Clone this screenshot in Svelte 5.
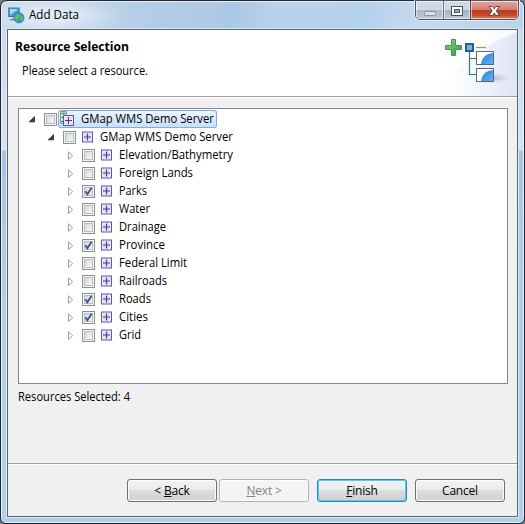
<script>
  const rows = [
    { label: 'GMap WMS Demo Server', level: 0, open: true, server: true, w: 133 },
    { label: 'GMap WMS Demo Server', level: 1, open: true, w: 133 },
    { label: 'Elevation/Bathymetry', level: 2, w: 114 },
    { label: 'Foreign Lands', level: 2, w: 74 },
    { label: 'Parks', level: 2, checked: true, w: 28 },
    { label: 'Water', level: 2, w: 31 },
    { label: 'Drainage', level: 2, w: 47 },
    { label: 'Province', level: 2, checked: true, w: 46 },
    { label: 'Federal Limit', level: 2, w: 68 },
    { label: 'Railroads', level: 2, w: 48 },
    { label: 'Roads', level: 2, checked: true, w: 32 },
    { label: 'Cities', level: 2, checked: true, w: 29 },
    { label: 'Grid', level: 2, w: 22 }
  ];
</script>

{#snippet fitted(label, w)}
  <svg class="label" width={w} height="18"><text x="0" y="13" textLength={w} lengthAdjust="spacingAndGlyphs">{label}</text></svg>
{/snippet}

{#snippet layerIcon()}
  <svg class="layer" width="11" height="12" viewBox="0 0 11 12">
    <rect x=".5" y="1" width="10" height="10" fill="#f1edfd" stroke="#6252a6" />
    <path d="M2 2.5h7v7H2z" fill="#e2dcf9" />
    <path d="M5.5 2.5v7M2 6h7" stroke="#4c398f" stroke-width="1.1" />
  </svg>
{/snippet}

<div class="window">
  <header class="titlebar">
    <svg width="17" height="17" viewBox="0 0 17 17">
      <rect x=".7" y="1" width="10.5" height="8.5" fill="#4b9cdb" stroke="#3a76b4" />
      <path d="M2 2h8L2 8z" fill="#a8dbf7" />
      <path d="M4 10h4v2H4z" fill="#b9c8da" /><path d="M2 12.7h7" stroke="#6b89b1" stroke-width="1.4" />
      <circle cx="11" cy="10.8" r="5.1" fill="#3b8fc9" stroke="#3879a9" stroke-width=".7" />
      <path d="M8 7.5l3-1 1.5 1-1 1.5 1 1.5-2 1-1 3-2-2-.8-2zM13 9l2.3 1-.6 3-1.7 1-.8-2z" fill="#5fc35b" />
    </svg>
    <div class="title">{@render fitted('Add Data', 50)}</div>
    <div class="controls">
      <div class="ctl min"><svg width="27" height="19" viewBox="0 0 27 19"><rect x="8.5" y="10.5" width="11" height="4" rx=".5" fill="#dce0e6" stroke="#8b97a8" /></svg></div>
      <div class="ctl max"><svg width="26" height="19" viewBox="0 0 26 19"><rect x="7.5" y="5.5" width="11" height="9" fill="#fff" stroke="#4c535f" /><rect x="10.5" y="8.5" width="5" height="3" fill="#9ba9b9" stroke="#4c535f" /></svg></div>
      <div class="ctl close"><svg width="47" height="19" viewBox="0 0 47 19"><path d="M18 5.5h3.5l1.7 2.4 1.7-2.4h3.5l-3.2 4.3 3.3 4.7h-3.6l-1.7-2.6-1.7 2.6h-3.6l3.3-4.7z" fill="#fff" stroke="#5b3d43" stroke-width=".9" /></svg></div>
    </div>
  </header>
  <main class="client">
    <section class="banner">
      <div class="bannertext">
        <h1>{@render fitted('Resource Selection', 114)}</h1>
        <p>{@render fitted('Please select a resource.', 126)}</p>
      </div>
      <svg class="art" width="117" height="66" viewBox="0 0 117 66">
        <defs>
          <linearGradient id="wash"><stop offset="0" stop-color="#fff" stop-opacity="0" /><stop offset=".55" stop-color="#f3f5fc" /><stop offset="1" stop-color="#dfe4f6" /></linearGradient>
          <linearGradient id="wash2"><stop offset="0" stop-color="#fff" /><stop offset="1" stop-color="#e9edfa" stop-opacity=".6" /></linearGradient>
          <linearGradient id="blue" x2="1" y2="1"><stop offset="0" stop-color="#2279d7" /><stop offset="1" stop-color="#65b5fa" /></linearGradient>
          <linearGradient id="green" x2="1" y2="1"><stop offset="0" stop-color="#8bd47d" /><stop offset="1" stop-color="#2f9650" /></linearGradient>
          <radialGradient id="shade"><stop offset="0" stop-color="#a7a8b8" stop-opacity=".7" /><stop offset="1" stop-color="#c8c8d8" stop-opacity="0" /></radialGradient>
        </defs>
        <path d="M117 2C82 14 58 38 30 66h87z" fill="url(#wash)" />
        <path d="M70 0h47v5C96 10 82 20 70 30z" fill="url(#wash2)" opacity=".45" />
        <g transform="translate(8 0)">
          <ellipse cx="87" cy="48" rx="15" ry="6" fill="url(#shade)" />
          <path d="M43.5 9.5h4v6h6v4h-6v6h-4v-6h-6v-4h6z" fill="url(#green)" stroke="#3d9b52" />
          <path d="M61.5 22v22.5h7M61.5 28.5h7" fill="none" stroke="#34805f" stroke-width="1.2" />
          <path d="M68 17.5h10" stroke="#7ba968" stroke-width="1.2" />
          <rect x="58" y="14" width="7" height="7" fill="#77b4df" stroke="#245f91" stroke-width="2" />
          <rect x="68.5" y="21.5" width="17" height="13" fill="#fff" stroke="#5b6878" />
          <path d="M73 34c1-6 4-10 12-11v11z" fill="url(#blue)" />
          <rect x="68.5" y="38.5" width="17" height="13" fill="#fff" stroke="#5b6878" />
          <path d="M73 51c1-6 4-10 12-11v11z" fill="url(#blue)" />
        </g>
      </svg>
    </section>
    <section class="body">
      <div class="tree">
        {#each rows as row}
          <div class="row level{row.level}">
            <span class="expander">
              <svg width="8" height="9" viewBox="0 0 8 9">
                {#if row.open}
                  <path d="M6.5 1.8v5H1.3z" fill="#404040" stroke="#222" stroke-width=".8" />
                {:else}
                  <path d="M2.5.8l4.2 3.8-4.2 3.8z" fill="#fff" stroke="#a0a0a0" />
                {/if}
              </svg>
            </span>
            <span class="check">
              {#if row.checked}
                <svg width="9" height="9" viewBox="0 0 9 9"><path d="M1.4 4.2l2 3L7.6.8" fill="none" stroke="#405892" stroke-width="1.9" /></svg>
              {/if}
            </span>
            <span class="item" class:selected={row.server}>
              {#if row.server}
                <svg class="server" width="16" height="16" viewBox="0 0 16 16">
                  <path d="M1.5.5h6v12h-6z" fill="#dceadd" stroke="#7c9587" stroke-width=".9" />
                  <path d="M2.5 2.5h4M2.5 6.5h2" stroke="#3f9353" stroke-width="1.6" /><path d="M2 10.5h2" stroke="#555" />
                  <rect x="4.5" y="4.5" width="10" height="10" fill="#eae4fc" stroke="#6252a6" />
                  <path d="M9.5 6v7M6 9.5h7" stroke="#4c398f" stroke-width="1.1" />
                </svg>
              {:else}
                {@render layerIcon()}
              {/if}
              {@render fitted(row.label, row.w)}
            </span>
          </div>
        {/each}
      </div>
      <div class="status">{@render fitted('Resources Selected: 4', 112)}</div>
    </section>
    <footer>
      <button><span>&lt; <u>B</u>ack</span></button>
      <button class="disabled" disabled><span><u>N</u>ext &gt;</span></button>
      <button class="default"><span><u>F</u>inish</span></button>
      <button class="cancel"><span>Cancel</span></button>
    </footer>
  </main>
</div>

<style>
  :global(body) { background: #777; overflow: hidden; }
  .window {
    box-sizing: border-box; width: 525px; height: 524px; padding: 0 6px 6px;
    display: flex; flex-direction: column;
    border: 1px solid #20242c; border-radius: 7px 7px 6px 6px;
    box-shadow: inset 0 0 0 1px #e5f2fb;
    background: linear-gradient(#c9d9ea 0, #d7e4f1 149px, #a9c4e0 150px, #b3cfea 300px, #b3d0ea);
    font: 12px "Open Sans", "Noto Sans", sans-serif; color: #000;
  }
  svg { display: block; flex: none; overflow: visible; }
  text { fill: #000; }
  .titlebar {
    height: 27px; margin: 1px -5px 0; padding-left: 6px; display: flex; align-items: flex-start; flex: none;
    border-radius: 6px 6px 0 0;
    background: radial-gradient(ellipse 75px 22px at 50px 14px, #e2ebf5 20%, #d5e3f200), linear-gradient(100deg, #c4d6ea 0, #abc8e4 45%, #b7d2ec 52%, #b5d2ed 70%, #c7d9ee 80%, #b9d2ea);
  }
  .titlebar > svg { margin-top: 5px; }
  .title { margin: 4px 0 0 4px; }
  .controls {
    display: flex; margin: -2px 4px 0 auto; box-sizing: border-box; width: 104px; height: 20px;
    border: 1px solid #4d5664; border-radius: 0 0 5px 5px; overflow: hidden; box-shadow: 0 0 0 1px #dfebf6;
  }
  .ctl { box-sizing: border-box; box-shadow: inset 0 0 0 1px #ffffff90; }
  .min { width: 27px; background: linear-gradient(#d0dae6 48%, #a9b8ca 50%, #b9cadb); }
  .max { width: 27px; border-left: 1px solid #65707f; background: linear-gradient(#d0dae6 48%, #a1b1c4 50%, #b9cadb); }
  .close { width: 48px; border-left: 1px solid #5d3b40; background: linear-gradient(#e4a69a 0, #d38072 48%, #b83822 50%, #c84d2d 80%, #de8a68); }
  .client {
    flex: 1; display: flex; flex-direction: column; min-height: 0;
    border: 1px solid #596573; box-shadow: 0 0 0 1px #dcebf8; background: #f0f0f0;
  }
  .banner { height: 66px; flex: none; display: flex; justify-content: space-between; background: #fff; border-bottom: 1px solid #a0a0a0; box-shadow: 0 1px #fff; }
  .art { overflow: hidden; }
  .bannertext { padding: 8px 0 0 7px; }
  h1 { margin: 0; font: bold 12px/18px "Open Sans", "Noto Sans", sans-serif; }
  p { margin: 6px 0 0 7px; }
  .body { flex: 1; padding: 11px 9px 0 10px; }
  .tree { box-sizing: border-box; height: 276px; border: 1px solid #828790; background: #fff; padding-top: 1px; }
  .row { height: 18px; display: flex; align-items: center; padding-left: 9px; }
  .level1 { padding-left: 28px; }
  .level2 { padding-left: 47px; }
  .expander { width: 16px; padding-top: 1px; }
  .check {
    box-sizing: border-box; width: 13px; height: 13px; padding: 1px; margin-top: 1px;
    border: 1px solid #8e8f8f; box-shadow: inset 0 0 0 1px #f4f4f4, inset 0 0 0 2px #b9bec5;
    background: linear-gradient(135deg, #cbcfd5, #f6f6f6 80%);
  }
  .item { display: flex; align-items: center; height: 18px; margin-left: 2px; padding-left: 4px; box-sizing: border-box; }
  .layer { margin-right: 7px; }
  .server { margin-right: 6px; }
  .selected { margin-left: 1px; padding: 0 3px 0 1px; border-radius: 3px; background: linear-gradient(#eff6fe, #c6dffc); box-shadow: inset 0 0 0 1px #84acdd; }
  .status { margin-top: 4px; }
  footer { height: 53px; flex: none; display: flex; padding: 15px 12px 0 0; justify-content: flex-end; box-sizing: border-box; border-top: 1px solid #a0a0a0; box-shadow: inset 0 1px #fff; }
  button {
    box-sizing: border-box; width: 90px; height: 23px; margin: 0 0 0 2px; padding: 0;
    font: 12px/19px "Open Sans", "Noto Sans", sans-serif; color: #000; letter-spacing: -.2px;
    border: 1px solid #707070; border-radius: 3px; box-shadow: inset 0 0 0 1px #fcfcfc;
    background: linear-gradient(#f2f2f2, #ebebeb 48%, #dddddd 50%, #cfcfcf);
  }
  .disabled { color: #838383; border-color: #adb2b5; background: #f4f4f4; }
  .default { margin-left: 8px; border-color: #3c7fb1; box-shadow: inset 0 0 0 1px #48d0f5; }
  .cancel { margin-left: 8px; }
  u { text-underline-offset: 1px; }
</style>
